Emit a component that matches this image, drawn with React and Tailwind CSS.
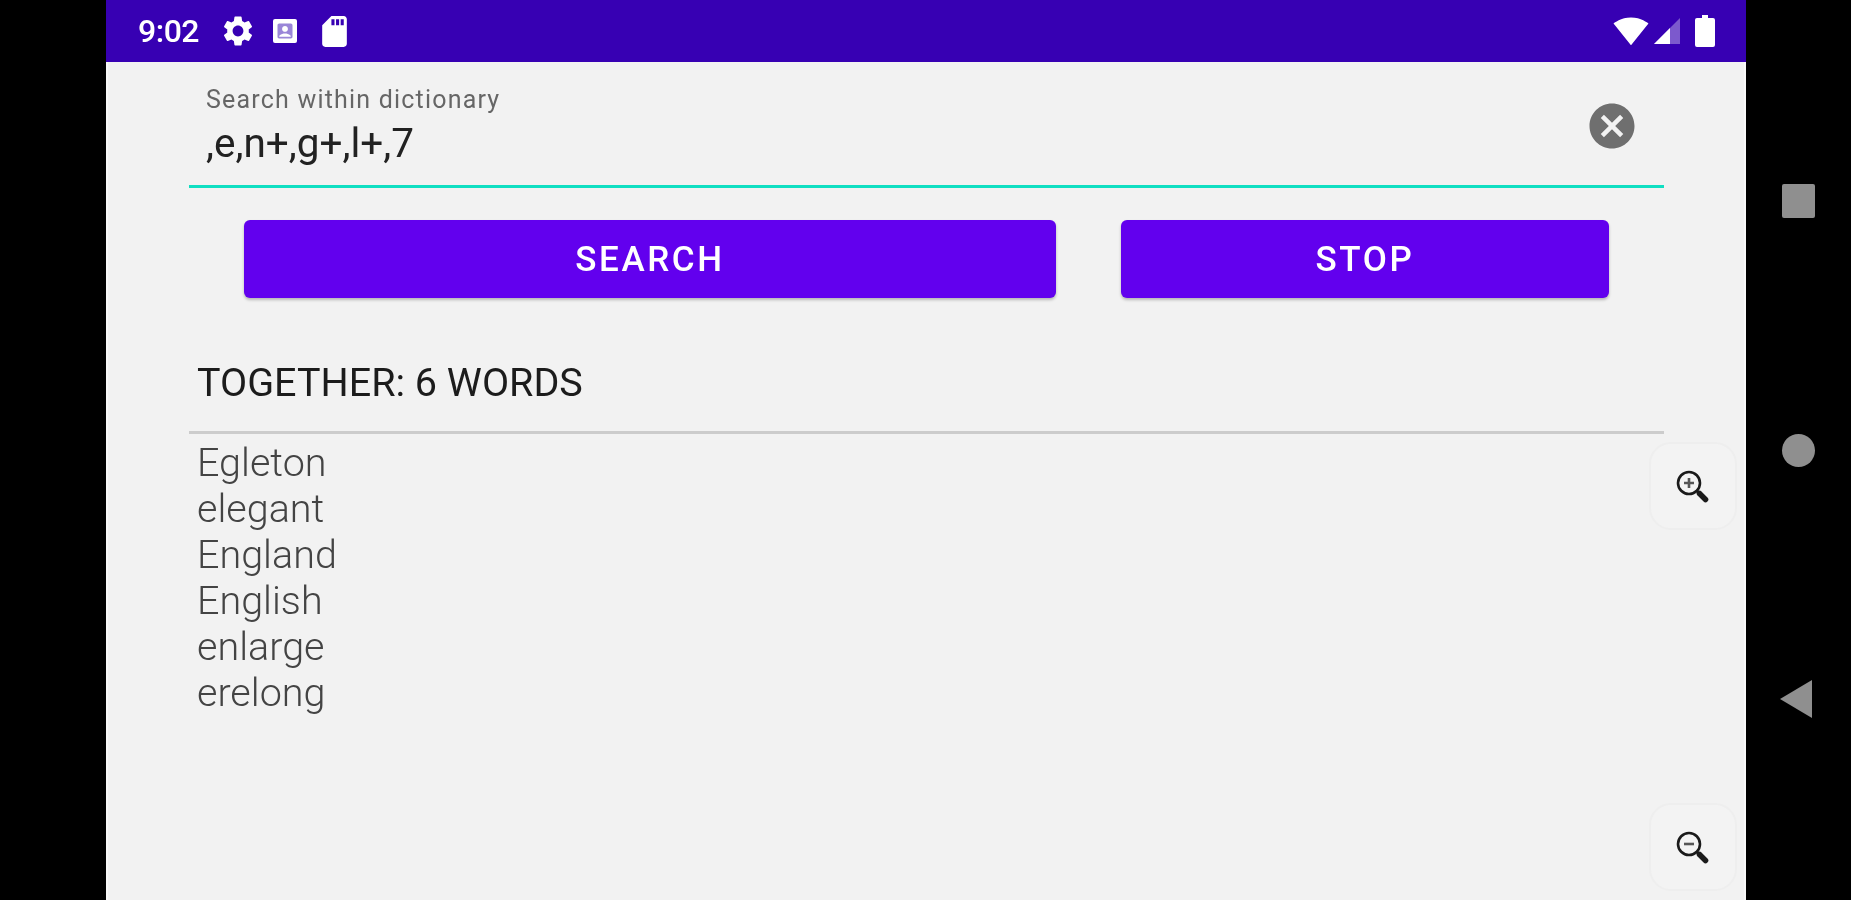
import { MdSettings, MdSdCard, MdSignalWifi4Bar, MdAccountBox, MdCancel } from "react-icons/md"

const words = ["Egleton", "elegant", "England", "English", "enlarge", "erelong"]

function ZoomIcon({ minus }) {
    return (
        <svg width="34" height="34" viewBox="0 0 34 34" fill="none" stroke="#1a1a1a" className="-ml-[2px]">
            <circle cx="14" cy="14" r="11" strokeWidth="2.6" />
            <path d="M22 22l3 3" strokeWidth="2.6" />
            <path d="M24.5 24.5l6 6" strokeWidth="5.5" strokeLinecap="round" />
            {minus ? (
                <path d="M9 14h10" strokeWidth="2.6" stroke="#555" />
            ) : (
                <path d="M9 14h10M14 9v10" strokeWidth="2.6" stroke="#555" />
            )}
        </svg>
    )
}

function ZoomButton({ minus, className }) {
    return (
        <button className={`absolute right-[7px] w-[88px] h-[88px] rounded-[22px] border-2 border-[#eeeeee] bg-[#f3f3f3] flex items-center justify-center ${className}`}>
            <ZoomIcon minus={minus} />
        </button>
    )
}

export default function App() {
    return (
        <div className="flex w-screen h-screen overflow-hidden bg-black font-['Roboto',sans-serif] blur-[0.6px]">
            <div className="w-[106px] shrink-0" />

            {/* Phone screen */}
            <div className="relative w-[1640px] shrink-0 bg-[#f2f2f2] border-x-2 border-[#f9f9f9]">
                {/* Status bar */}
                <div className="h-[62px] -mx-[2px] bg-[#3700b3] flex items-center justify-between pl-[32px] pr-[31px] text-white">
                    <div className="flex items-center">
                        <span className="text-[32px] font-medium tracking-[-0.5px] w-[60px] whitespace-nowrap">9:02</span>
                        <MdSettings size={36} className="ml-[22px]" />
                        <div className="ml-[17px] w-[24px] h-[24px] rounded-[2px] bg-white flex items-center justify-center">
                            <MdAccountBox size={20} className="text-[#9a86d8]" />
                        </div>
                        <MdSdCard size={37} className="ml-[19px]" />
                    </div>
                    <div className="flex items-center">
                        <MdSignalWifi4Bar size={36} className="-ml-[3px]" />
                        <svg width="28" height="28" viewBox="0 0 28 28" className="ml-[4px]">
                            <path d="M27 1v26H1z" fill="#ffffff" fillOpacity="0.35" />
                            <path d="M17 11v16H1z" fill="#ffffff" />
                        </svg>
                        <svg width="20" height="32" viewBox="0 0 20 32" fill="#ffffff" className="ml-[14px]">
                            <path d="M7 0h6v3h5a2 2 0 0 1 2 2v25a2 2 0 0 1-2 2H2a2 2 0 0 1-2-2V5a2 2 0 0 1 2-2h5z" />
                        </svg>
                    </div>
                </div>

                {/* Search field */}
                <div className="ml-[81px] w-[1475px] h-[126px] border-b-[3px] border-[#10dfc2] relative pl-[17px]">
                    <div className="pt-[23px] text-[25px] leading-[30px] text-[#666666] tracking-[1.2px]">Search within dictionary</div>
                    <div className="mt-[5px] text-[40.5px] leading-[46px] text-[#222222]">,e,n+,g+,l+,7</div>
                    <MdCancel size={54} className="absolute right-[25px] top-[37px] text-[#6f6f6f]" />
                </div>

                {/* Buttons */}
                <div className="flex ml-[136px] mt-[32px] gap-[65px]">
                    <button className="w-[812px] h-[78px] rounded-[6px] bg-[#6200ee] text-white text-[35px] font-medium tracking-[2.6px] pt-[2px] shadow-[0_2px_3px_rgba(0,0,0,0.25)]">SEARCH</button>
                    <button className="w-[488px] h-[78px] rounded-[6px] bg-[#6200ee] text-white text-[35px] font-medium tracking-[2.6px] pt-[2px] shadow-[0_2px_3px_rgba(0,0,0,0.25)]">STOP</button>
                </div>

                {/* Results */}
                <div className="ml-[81px] w-[1475px] h-[136px] border-b-[3px] border-[#cccccc] pl-[8px] pt-[62px] text-[39.5px] leading-[46px] text-[#1c1c1c]">
                    TOGETHER: 6 WORDS
                </div>
                <div className="ml-[89px] mt-[6px] text-[39.5px] leading-[46px] font-light text-[#444444]">
                    {words.map((word) => (
                        <div key={word}>{word}</div>
                    ))}
                </div>

                <ZoomButton className="top-[442px]" />
                <ZoomButton minus className="top-[803px]" />
            </div>

            {/* Navigation bar */}
            <div className="flex-1 flex flex-col items-center pt-[184px]">
                <div className="w-[33px] h-[34px] rounded-[2px] bg-[#8f8f8f]" />
                <div className="w-[33px] h-[33px] mt-[216px] rounded-full bg-[#8f8f8f]" />
                <svg width="32" height="38" viewBox="0 0 32 38" className="mt-[213px] -ml-[5px]">
                    <path d="M0 19L32 0v38z" fill="#8f8f8f" />
                </svg>
            </div>
        </div>
    )
}
